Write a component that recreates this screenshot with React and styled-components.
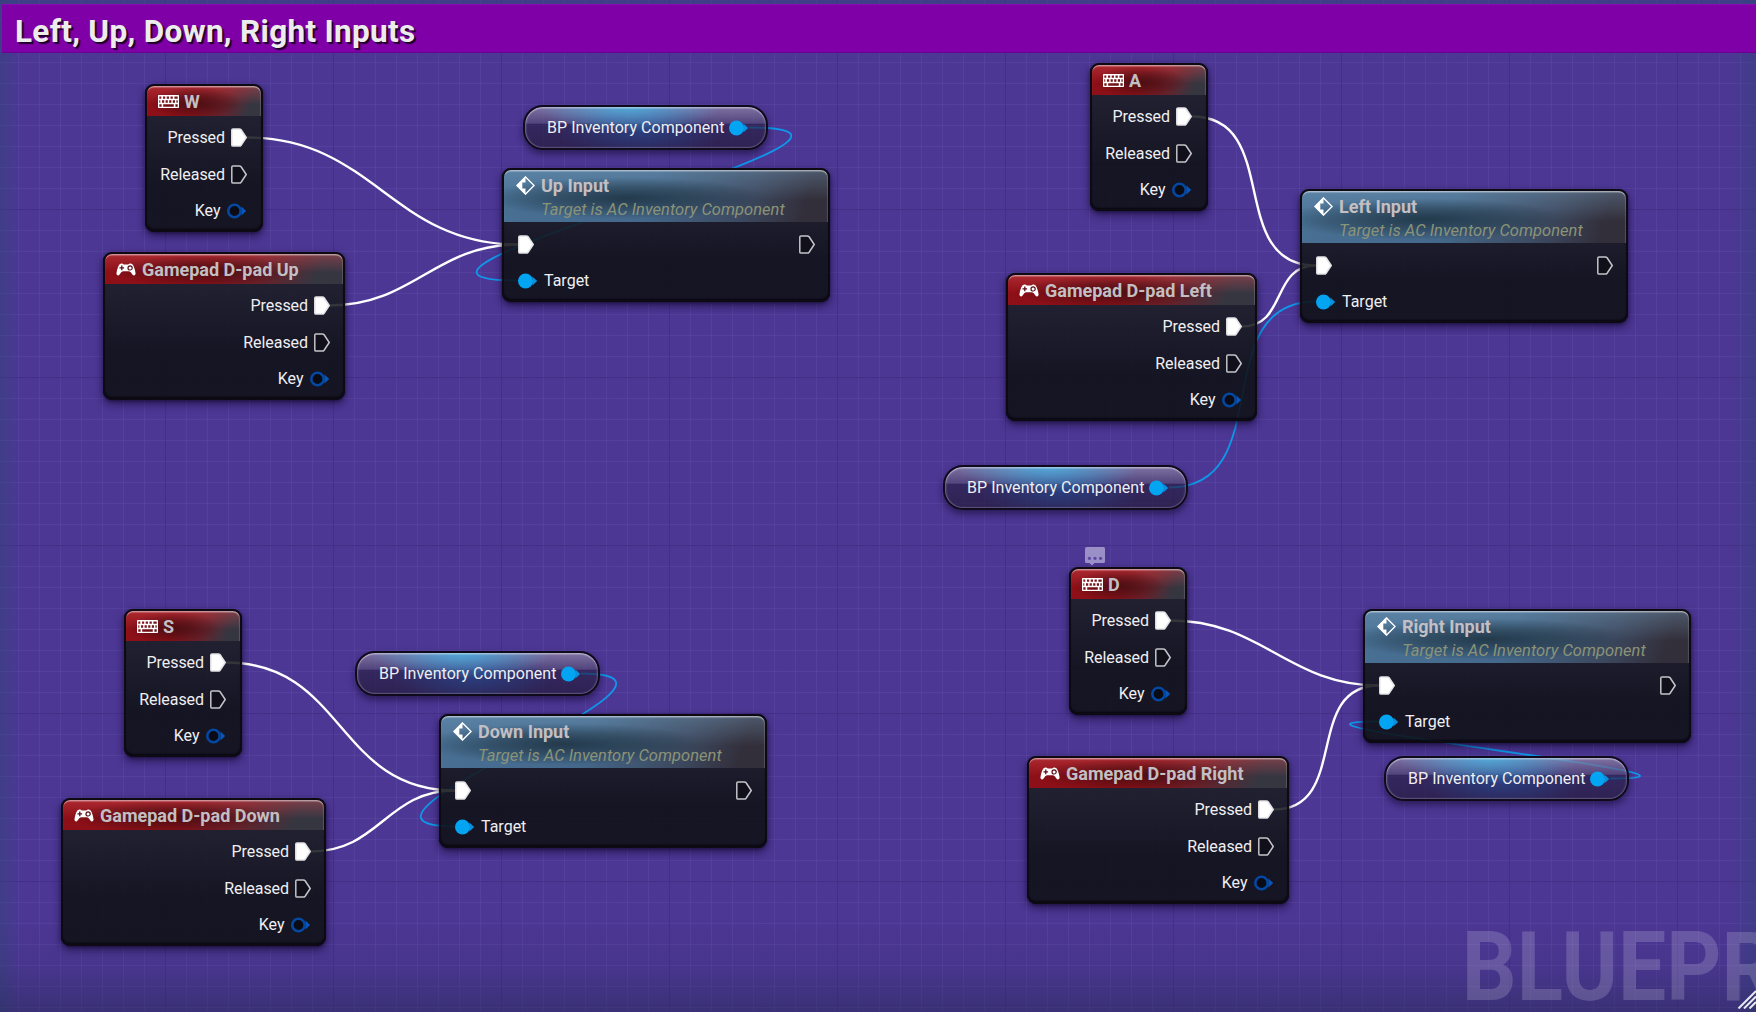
import React from "react";
import styled, { createGlobalStyle, css } from "styled-components";

const GlobalStyle = createGlobalStyle`
  *, *::before, *::after { box-sizing: border-box; }
  html, body { margin: 0; padding: 0; background: #4c3794; }
  body { font-family: Roboto, "Liberation Sans", sans-serif; overflow: hidden; }
  svg { display: block; flex: none; }
`;

const Graph = styled.main`
  position: relative;
  width: 1756px;
  height: 1012px;
  overflow: hidden;
  background:
    linear-gradient(rgba(62, 38, 124, 0.65) 1px, transparent 1px) 0 41px / 168px 168px,
    linear-gradient(90deg, rgba(62, 38, 124, 0.65) 1px, transparent 1px) 165px 0 / 168px 168px,
    linear-gradient(rgba(98, 82, 172, 0.34) 1px, transparent 1px) 0 20px / 21px 21px,
    linear-gradient(90deg, rgba(98, 82, 172, 0.34) 1px, transparent 1px) 18px 0 / 21px 21px,
    #4c3794;
`;

const Vignette = styled.div`
  position: absolute;
  inset: 0;
  background:
    linear-gradient(0deg, rgba(40, 42, 88, 0.5), rgba(40, 42, 88, 0.12) 45px, transparent 95px),
    linear-gradient(90deg, rgba(48, 70, 120, 0.45), transparent 20px),
    linear-gradient(270deg, rgba(48, 70, 120, 0.45), transparent 24px),
    linear-gradient(180deg, rgba(48, 70, 120, 0.5), transparent 14px);
`;

const CommentBar = styled.header`
  position: relative;
  display: flex;
  align-items: center;
  height: 49px;
  margin: 4px 0 0 2px;
  padding: 6px 13px 0;
  background: #8000a7;
  box-shadow: inset 0 1px 0 #8c0cb4, inset 0 -1px 0 #6c0094;
`;

const CommentTitle = styled.h1`
  margin: 0;
  font-size: 31.5px;
  line-height: 36px;
  font-weight: 700;
  letter-spacing: 0.3px;
  white-space: nowrap;
  color: #ececec;
  text-shadow: 2px 2px 1px rgba(20, 0, 30, 0.9);
`;

const Watermark = styled.div`
  position: absolute;
  left: 1462px;
  top: 910px;
  font-size: 97px;
  line-height: 114px;
  font-weight: 700;
  white-space: nowrap;
  color: rgba(255, 255, 255, 0.17);
  transform: scaleX(0.883);
  transform-origin: 0 0;
`;

const ResizeGrip = styled.svg`
  position: absolute;
  right: 0;
  bottom: 3px;
`;

const Wires = styled.svg`
  position: absolute;
  inset: 0;
`;

const placed = css`
  position: absolute;
  left: ${(p) => p.$x}px;
  top: ${(p) => p.$y}px;
`;

const NodeFrame = styled.section`
  ${placed}
  width: ${(p) => p.$w}px;
  height: ${(p) => p.$h}px;
  display: flex;
  flex-direction: column;
  padding: 2px;
  border-radius: 9px;
  background: linear-gradient(rgba(29, 31, 37, 0.88) 24px, rgba(14, 16, 20, 0.88) 68%);
  box-shadow:
    inset 0 0 0 2px #0d0a14,
    inset 0 -2px 2px 1px rgba(5, 4, 10, 0.8),
    0 4px 8px rgba(15, 5, 40, 0.6),
    0 1px 3px rgba(15, 5, 40, 0.5);
`;

const gloss = css`
  border-radius: 7px 7px 0 0;
  box-shadow: inset 0 2px 1px -0.5px rgba(255, 255, 255, 0.42), inset -1px 1px 1px rgba(255, 255, 255, 0.15);
`;

const EventHeader = styled.div`
  ${gloss}
  display: flex;
  align-items: center;
  height: 30px;
  padding: 1px 0 0 11px;
  gap: ${(p) => (p.$keyboard ? 5 : 6)}px;
  background:
    radial-gradient(ellipse 40% 54% at 42% 56%, rgba(56, 14, 18, 0.78), rgba(56, 14, 18, 0.48) 45%, transparent),
    linear-gradient(180deg, rgba(220, 80, 88, 0.4), transparent 62%),
    linear-gradient(115deg, #8d0f17 0%, #8d0f17 44%, #6c2029 66%, #363641 88%);
`;

const EventTitle = styled.h2`
  margin: 0;
  font-size: 18px;
  line-height: 22px;
  font-weight: 700;
  white-space: nowrap;
  color: #c3bfc2;
`;

const EventPins = styled.div`
  display: grid;
  grid-template-rows: 37px 37px 35px;
  justify-items: end;
  align-items: center;
  padding: 3px ${(p) => (p.$keyboard ? 14 : 13)}px 0 0;
`;

const Pin = styled.div`
  display: flex;
  align-items: center;
  gap: ${(p) => p.$gap}px;
`;

const Label = styled.span`
  font-size: 16px;
  line-height: 20px;
  letter-spacing: ${(p) => p.$track || 0}px;
  white-space: nowrap;
  color: #efeff2;
`;

const CallHeader = styled.div`
  ${gloss}
  display: flex;
  height: 52px;
  padding: 6px 0 0 12px;
  gap: 6px;
  background:
    radial-gradient(ellipse 44% 40% at 38% 54%, rgba(30, 50, 64, 0.85), rgba(30, 50, 64, 0.5) 50%, transparent),
    linear-gradient(180deg, rgba(130, 170, 200, 0.34), transparent 58%),
    linear-gradient(108deg, rgba(76, 119, 156, 0.93) 0%, rgba(71, 110, 146, 0.93) 45%, rgba(62, 74, 96, 0.93) 76%, rgba(52, 48, 60, 0.93) 92%);
`;

const CallTitles = styled.div`
  display: flex;
  flex-direction: column;
  margin-top: -1px;
`;

const CallSubtitle = styled.p`
  margin: 1px 0 0;
  font-size: 16.5px;
  line-height: 24px;
  font-style: italic;
  letter-spacing: 0.02px;
  white-space: nowrap;
  color: #8b9377;
`;

const CallBody = styled.div`
  display: flex;
  flex-direction: column;
  padding-top: 4px;
`;

const CallRow = styled.div`
  display: flex;
  align-items: center;
  justify-content: space-between;
  height: 36.5px;
  padding: 0 13px 0 14px;
`;

const VariableNode = styled.section`
  ${placed}
  display: flex;
  align-items: center;
  justify-content: space-between;
  width: 245px;
  height: 45px;
  padding: 0 17px 0 22px;
  border-radius: 20px;
  border: 2px solid #100b1c;
  background:
    radial-gradient(ellipse 38% 62% at 43% 0%, rgba(72, 178, 226, 0.85), rgba(72, 178, 226, 0.4) 55%, transparent) padding-box,
    radial-gradient(ellipse 34% 60% at 48% 58%, rgba(38, 72, 140, 0.7), transparent) padding-box,
    linear-gradient(rgba(146, 136, 168, 0.72), rgba(84, 74, 114, 0.7) 40%, rgba(38, 30, 66, 0.65) 41%, rgba(34, 26, 56, 0.7)) padding-box;
  box-shadow:
    inset 0 2px 1px -0.5px rgba(255, 255, 255, 0.4),
    inset 2px 0 2px -1px rgba(255, 255, 255, 0.3),
    inset -2px 0 2px -1px rgba(255, 255, 255, 0.2),
    inset 0 -1px 1px rgba(255, 255, 255, 0.2),
    0 4px 7px rgba(15, 5, 40, 0.55);
`;

const Bubble = styled.svg`
  ${placed}
`;

const ExecPin = ({ on }) => (
  <svg width="16" height="19" viewBox="0 0 16 19">
    <path
      d="M2 .9H8.2Q9.4 .9 10.1 1.8L15.2 9.5L10.1 17.2Q9.4 18.1 8.2 18.1H2Q.8 18.1 .8 16.9V2.1Q.8 .9 2 .9Z"
      fill={on ? "#fff" : "#11101a"}
      stroke={on ? "#e4e4e6" : "#c4c4ca"}
      strokeWidth="1.5"
    />
  </svg>
);

const DataPin = ({ on }) => (
  <svg width="20" height="16" viewBox="0 0 20 16">
    <path d="M14.4 3.6L19.2 8L14.4 12.4Z" fill={on ? "#0a8fdc" : "#0a55b8"} />
    {on ? (
      <circle cx="7.5" cy="8" r="7.5" fill="#03a5f3" />
    ) : (
      <circle cx="7.5" cy="8" r="6.2" fill="#0b0b16" stroke="#0448a0" strokeWidth="2.6" />
    )}
  </svg>
);

const KeyboardIcon = () => (
  <svg width="21" height="13" viewBox="0 0 21 13">
    <path
      fill="#fff"
      fillRule="evenodd"
      d="M.7 0H20.3Q21 0 21 .7V12.3Q21 13 20.3 13H.7Q0 13 0 12.3V.7Q0 0 .7 0Z
         M1.3 1.4H3.3V3.8H1.3Z M5 1.4H7.2V3.8H5Z M8.7 1.4H11V3.8H8.7Z M12.5 1.4H14.8V3.8H12.5Z M16.4 1.4H19.7V3.8H16.4Z
         M1.3 5.2H2.3V7.7H1.3Z M4 5.2H6.2V7.7H4Z M7.6 5.2H9.8V7.7H7.6Z M11.2 5.2H13.4V7.7H11.2Z M14.8 5.2H17V7.7H14.8Z M18.4 5.2H19.7V7.7H18.4Z
         M1.3 9.2H3.6V11.7H1.3Z M5.2 9.2H15.8V11.7H5.2Z M17.4 9.2H19.7V11.7H17.4Z"
    />
  </svg>
);

const GamepadIcon = () => (
  <svg width="20" height="13" viewBox="0 0 20 13">
    <path
      fill="#fff"
      d="M5.2 .4Q6.8 .2 7.8 1.6H12.2Q13.2 .2 14.8 .4Q17 .8 17.8 3.6Q19.4 8 19.6 10.4Q19.4 12.6 17.6 12.4Q16.4 12 15 9.6Q13.8 8.2 12.4 8.2H7.6Q6.2 8.2 5 9.6Q3.6 12 2.4 12.4Q.6 12.6 .4 10.4Q.6 8 2.2 3.6Q3 .8 5.2 .4Z"
    />
    <path d="M5.8 2.6V7.2M3.5 4.9H8.1" stroke="#5a0f16" strokeWidth="1.3" />
    <circle cx="14.1" cy="4.9" r="2.1" fill="#fff" stroke="#5a0f16" strokeWidth="1.2" />
  </svg>
);

const CallIcon = () => (
  <svg width="19" height="19" viewBox="0 0 19 19">
    <path d="M9.5 .9L18.1 9.5L9.5 18.1L.9 9.5Z" fill="none" stroke="#fff" strokeWidth="1.4" />
    <path d="M9.5 .5V6.6H6.3V12.4H9.5V18.5L.5 9.5Z" fill="#fff" />
  </svg>
);

function EventNode({ x, y, w, title, keyboard }) {
  return (
    <NodeFrame $x={x} $y={y} $w={w} $h={148}>
      <EventHeader $keyboard={keyboard}>
        {keyboard ? <KeyboardIcon /> : <GamepadIcon />}
        <EventTitle>{title}</EventTitle>
      </EventHeader>
      <EventPins $keyboard={keyboard}>
        <Pin $gap={6}><Label $track={-0.05}>Pressed</Label><ExecPin on /></Pin>
        <Pin $gap={6}><Label $track={-0.05}>Released</Label><ExecPin /></Pin>
        <Pin $gap={6.5}><Label>Key</Label><DataPin /></Pin>
      </EventPins>
    </NodeFrame>
  );
}

function CallNode({ x, y, title }) {
  return (
    <NodeFrame $x={x} $y={y} $w={328} $h={134}>
      <CallHeader>
        <CallIcon />
        <CallTitles>
          <EventTitle>{title}</EventTitle>
          <CallSubtitle>Target is AC Inventory Component</CallSubtitle>
        </CallTitles>
      </CallHeader>
      <CallBody>
        <CallRow><ExecPin on /><ExecPin /></CallRow>
        <CallRow><Pin $gap={6}><DataPin on /><Label>Target</Label></Pin></CallRow>
      </CallBody>
    </NodeFrame>
  );
}

const VariableGet = ({ x, y }) => (
  <VariableNode $x={x} $y={y}>
    <Label $track={0.04}>BP Inventory Component</Label>
    <DataPin on />
  </VariableNode>
);

// Cubic connection whose handles lengthen with distance; backward links swing wider.
function wirePath([x1, y1, x2, y2]) {
  const dx = x2 - x1;
  const dy = Math.abs(y2 - y1);
  const reach = dx >= 0 ? (dx + dy) / 3 : (2 * Math.min(-dx, 200) + 1.5 * Math.min(dy, 200)) / 3;
  return `M${x1} ${y1}C${x1 + reach} ${y1} ${x2 - reach} ${y2} ${x2} ${y2}`;
}

const execWires = [
  [247, 137.5, 518, 244.5],
  [330, 305.5, 518, 244.5],
  [1192, 116.5, 1316, 265.5],
  [1242, 326.5, 1316, 265.5],
  [226, 662.5, 455, 790.5],
  [311, 851.5, 455, 790.5],
  [1171, 620.5, 1379, 685.5],
  [1274, 809.5, 1379, 685.5],
];

const dataWires = [
  [749, 127.5, 519, 280.5],
  [1169, 487.5, 1316, 301.5],
  [581, 673.5, 456, 826.5],
  [1610, 778.5, 1380, 721.5],
];

const events = [
  { x: 145, y: 84, w: 118, title: "W", keyboard: true },
  { x: 103, y: 252, w: 242, title: "Gamepad D-pad Up" },
  { x: 1090, y: 63, w: 118, title: "A", keyboard: true },
  { x: 1006, y: 273, w: 251, title: "Gamepad D-pad Left" },
  { x: 124, y: 609, w: 118, title: "S", keyboard: true },
  { x: 61, y: 798, w: 265, title: "Gamepad D-pad Down" },
  { x: 1069, y: 567, w: 118, title: "D", keyboard: true },
  { x: 1027, y: 756, w: 262, title: "Gamepad D-pad Right" },
];

const calls = [
  { x: 502, y: 168, title: "Up Input" },
  { x: 1300, y: 189, title: "Left Input" },
  { x: 439, y: 714, title: "Down Input" },
  { x: 1363, y: 609, title: "Right Input" },
];

const variables = [
  { x: 523, y: 105 },
  { x: 943, y: 465 },
  { x: 355, y: 651 },
  { x: 1384, y: 756 },
];

export default function App() {
  return (
    <>
      <GlobalStyle />
      <Graph>
        <Vignette />
        <CommentBar>
          <CommentTitle>Left, Up, Down, Right Inputs</CommentTitle>
        </CommentBar>
        <Wires width="1756" height="1012" fill="none">
          {dataWires.map((w) => (
            <path key={w.join()} d={wirePath(w)} stroke="#0f98ea" strokeWidth="1.8" />
          ))}
          {execWires.map((w) => (
            <path key={w.join()} d={wirePath(w)} stroke="#fff" strokeWidth="2.4" />
          ))}
        </Wires>
        {events.map((n) => <EventNode key={n.title} {...n} />)}
        {calls.map((n) => <CallNode key={n.title} {...n} />)}
        {variables.map((n) => <VariableGet key={n.x} {...n} />)}
        <Bubble $x={1085} $y={547} width="20" height="19" viewBox="0 0 20 19">
          <path d="M1.5 0H18.5Q20 0 20 1.5V14.5Q20 16 18.5 16H9.5L7 18.6L4.5 16H1.5Q0 16 0 14.5V1.5Q0 0 1.5 0Z" fill="#9b8fc8" />
          <g fill="#5a479c">
            <circle cx="4.4" cy="11.3" r="1.6" />
            <circle cx="10" cy="11.3" r="1.6" />
            <circle cx="15.6" cy="11.3" r="1.6" />
          </g>
        </Bubble>
        <Watermark>BLUEPR</Watermark>
        <ResizeGrip width="18" height="19" viewBox="0 0 18 19">
          <path d="M.5 18.5L18 1M6 18.5L18 6.5M11.5 18.5L18 12" stroke="#e8e8ee" strokeWidth="2" />
        </ResizeGrip>
      </Graph>
    </>
  );
}
